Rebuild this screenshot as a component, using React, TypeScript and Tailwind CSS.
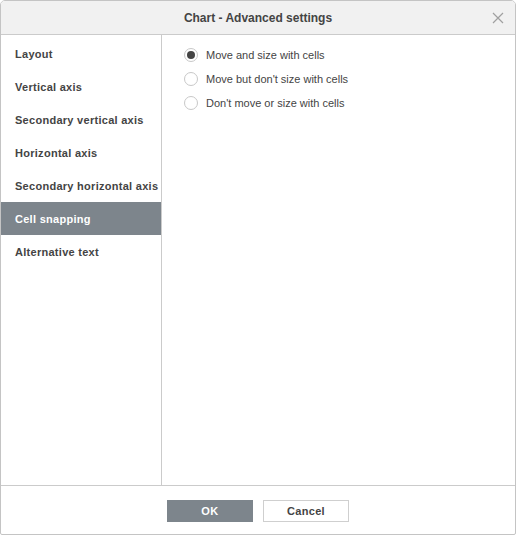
import React, { useState } from 'react'

const sections = [
  'Layout',
  'Vertical axis',
  'Secondary vertical axis',
  'Horizontal axis',
  'Secondary horizontal axis',
  'Cell snapping',
  'Alternative text',
]

const snapOptions = [
  'Move and size with cells',
  "Move but don't size with cells",
  "Don't move or size with cells",
]

function Radio({ checked }: { checked: boolean }) {
  return (
    <span className="w-[14px] h-[14px] rounded-full border border-[#c8c8c8] bg-white flex items-center justify-center shrink-0">
      {checked && <span className="w-[8px] h-[8px] rounded-full bg-[#444]" />}
    </span>
  )
}

export default function App() {
  const [active, setActive] = useState(5)
  const [snap, setSnap] = useState(0)

  return (
    <div
      className="w-[516px] h-[535px] bg-white border border-[#c4c4c4] rounded-t-[5px] rounded-b-[2px] flex flex-col text-[#444] overflow-hidden"
      style={{ fontFamily: '"Liberation Sans", Arial, sans-serif' }}
    >
      <div className="h-[34px] shrink-0 bg-[#f1f1f1] border-b border-[#cbcbcb] flex items-center justify-center relative">
        <span className="text-[12px] font-bold">Chart - Advanced settings</span>
        <button className="absolute right-[11px] top-[11px] w-[12px] h-[12px] flex items-center justify-center">
          <svg width="12" height="12" viewBox="0 0 12 12">
            <path d="M1 1 L11 11 M11 1 L1 11" stroke="#a0a0a0" strokeWidth="1.2" fill="none" />
          </svg>
        </button>
      </div>

      <div className="flex flex-1 min-h-0">
        <div className="w-[161px] shrink-0 border-r border-[#cbcbcb] pt-[2px]">
          {sections.map((s, i) => (
            <div
              key={s}
              onClick={() => setActive(i)}
              className={
                'h-[33px] flex items-center pl-[14px] pt-[2px] text-[11px] font-bold tracking-[0.28px] cursor-pointer ' +
                (i === active ? 'bg-[#7d858c] text-white' : 'text-[#444]')
              }
            >
              {s}
            </div>
          ))}
        </div>

        <div className="flex-1 pl-[22px] pt-[13px] flex flex-col gap-[10px]">
          {snapOptions.map((o, i) => (
            <label
              key={o}
              onClick={() => setSnap(i)}
              className="flex items-center gap-[8px] h-[14px] text-[11px] cursor-pointer"
            >
              <Radio checked={snap === i} />
              <span>{o}</span>
            </label>
          ))}
        </div>
      </div>

      <div className="h-[49px] shrink-0 border-t border-[#cbcbcb] flex items-start pt-[14px] justify-center gap-[10px]">
        <button className="w-[86px] h-[22px] bg-[#7d858c] text-white text-[11px] font-bold tracking-[0.5px]">
          OK
        </button>
        <button className="w-[86px] h-[22px] bg-white border border-[#cfcfcf] text-[#444] text-[11px] font-bold tracking-[0.3px]">
          Cancel
        </button>
      </div>
    </div>
  )
}
